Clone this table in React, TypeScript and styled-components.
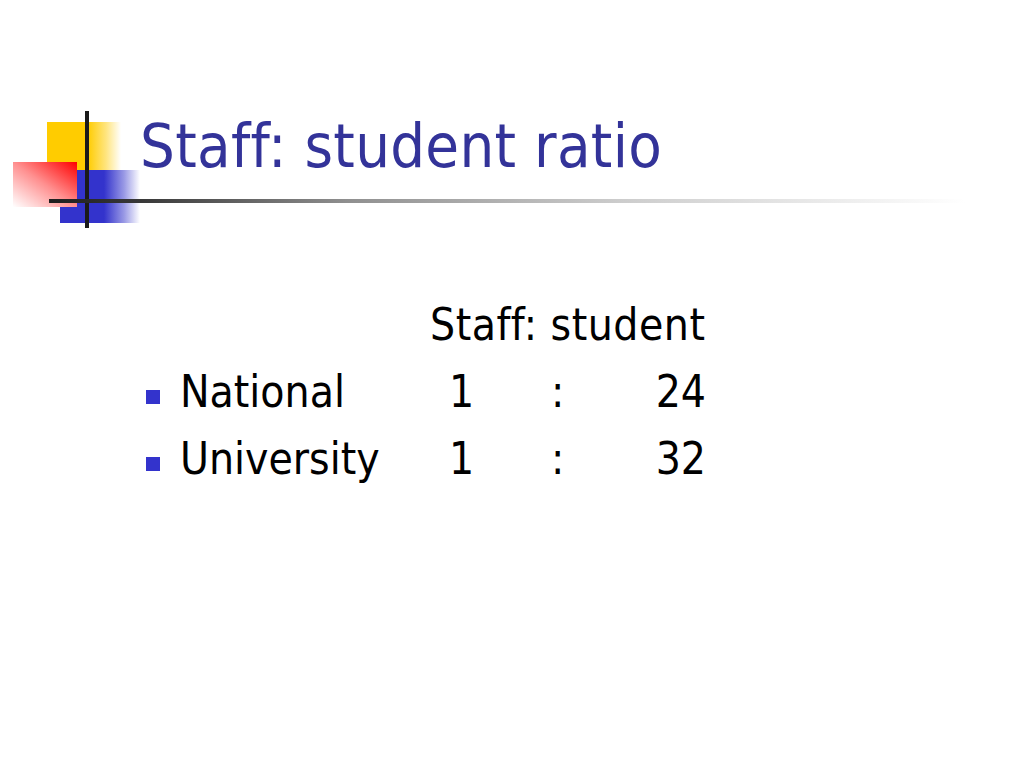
import React from "react";
import styled, { createGlobalStyle } from "styled-components";

const GlobalStyle = createGlobalStyle`
  html, body {
    margin: 0;
    padding: 0;
    background: #ffffff;
  }
  body {
    font-family: "DejaVu Sans Condensed", "DejaVu Sans", sans-serif;
    font-stretch: condensed;
    font-variant-ligatures: none;
    font-feature-settings: "liga" 0, "clig" 0;
  }
`;

const Slide = styled.div`
  width: 1024px;
  height: 768px;
  background: #ffffff;
  display: flex;
  flex-direction: column;
  overflow: hidden;
`;

const Header = styled.header`
  display: flex;
  align-items: flex-start;
  padding-top: 105px;
`;

const LogoSvg = styled.svg`
  display: block;
  flex: none;
  width: 140px;
  height: 125px;
`;

const TitleColumn = styled.div`
  display: flex;
  flex-direction: column;
  width: 825px;
`;

const Title = styled.h1`
  margin: 11px 0 0 0;
  font-family: "DejaVu Sans Condensed", "DejaVu Sans", sans-serif;
  font-stretch: condensed;
  font-variant-ligatures: none;
  font-feature-settings: "liga" 0, "clig" 0;
  font-weight: normal;
  font-size: 61px;
  letter-spacing: 0.3px;
  line-height: 60px;
  color: #333399;
  white-space: nowrap;
`;

const Rule = styled.div`
  margin-top: 23px;
  height: 4px;
  background: linear-gradient(
    to right,
    #383838 0%,
    #8f8f8f 25%,
    #cccccc 58%,
    #ffffff 100%
  );
`;

const Table = styled.div`
  margin-top: 61px;
  margin-left: 146px;
  width: 560px;
  display: grid;
  grid-template-columns: 34px 269px 102px 40px 115px;
  grid-auto-rows: 67px;
  font-family: "DejaVu Sans Condensed", "DejaVu Sans", sans-serif;
  font-stretch: condensed;
  font-variant-ligatures: none;
  font-feature-settings: "liga" 0, "clig" 0;
  font-size: 44px;
  line-height: 67px;
  color: #000000;
`;

const HeadCell = styled.div`
  grid-column: 1 / -1;
  padding-left: 284px;
  letter-spacing: 0.5px;
  white-space: nowrap;
`;

const BulletCell = styled.div`
  display: flex;
  align-items: flex-start;
`;

const Bullet = styled.span`
  display: block;
  width: 14px;
  height: 14px;
  margin-top: 32px;
  background: #3333cc;
`;

const Cell = styled.div<{ $align?: "left" | "right" }>`
  white-space: nowrap;
  text-align: ${(p) => p.$align ?? "left"};
`;

const rows = [
  { label: "National", staff: "1", students: "24" },
  { label: "University", staff: "1", students: "32" },
];

function Logo() {
  return (
    <LogoSvg viewBox="0 105 140 125" xmlns="http://www.w3.org/2000/svg">
      <defs>
        <linearGradient id="yel" x1="0" y1="0" x2="1" y2="0">
          <stop offset="0" stopColor="#ffcc00" />
          <stop offset="0.55" stopColor="#ffcc00" />
          <stop offset="0.8" stopColor="#ffe580" />
          <stop offset="1" stopColor="#ffffff" />
        </linearGradient>
        <linearGradient id="blu" x1="0" y1="0" x2="1" y2="0">
          <stop offset="0" stopColor="#3333cc" />
          <stop offset="0.55" stopColor="#3333cc" />
          <stop offset="0.8" stopColor="#9999e5" />
          <stop offset="1" stopColor="#ffffff" />
        </linearGradient>
        <linearGradient id="red" x1="1" y1="0" x2="0" y2="1">
          <stop offset="0" stopColor="#ff0000" />
          <stop offset="0.5" stopColor="#ff9090" />
          <stop offset="1" stopColor="#ffffff" />
        </linearGradient>
        <linearGradient id="hline" x1="0" y1="0" x2="1" y2="0">
          <stop offset="0" stopColor="#1e1e1e" />
          <stop offset="1" stopColor="#383838" />
        </linearGradient>
      </defs>
      <rect x="47" y="122" width="74" height="48" fill="url(#yel)" />
      <rect x="60" y="170" width="80" height="53" fill="url(#blu)" />
      <rect x="13" y="162" width="64" height="45" fill="url(#red)" />
      <rect x="85" y="111" width="4" height="117" fill="#1a1a1a" />
      <rect x="49" y="199" width="91" height="4" fill="url(#hline)" />
    </LogoSvg>
  );
}

export default function App() {
  return (
    <>
      <GlobalStyle />
      <Slide>
        <Header>
          <Logo />
          <TitleColumn>
            <Title>Staff: student ratio</Title>
            <Rule />
          </TitleColumn>
        </Header>
        <Table>
          <HeadCell>Staff: student</HeadCell>
          {rows.map((r) => (
            <React.Fragment key={r.label}>
              <BulletCell>
                <Bullet />
              </BulletCell>
              <Cell>{r.label}</Cell>
              <Cell>{r.staff}</Cell>
              <Cell>:</Cell>
              <Cell $align="right">{r.students}</Cell>
            </React.Fragment>
          ))}
        </Table>
      </Slide>
    </>
  );
}
